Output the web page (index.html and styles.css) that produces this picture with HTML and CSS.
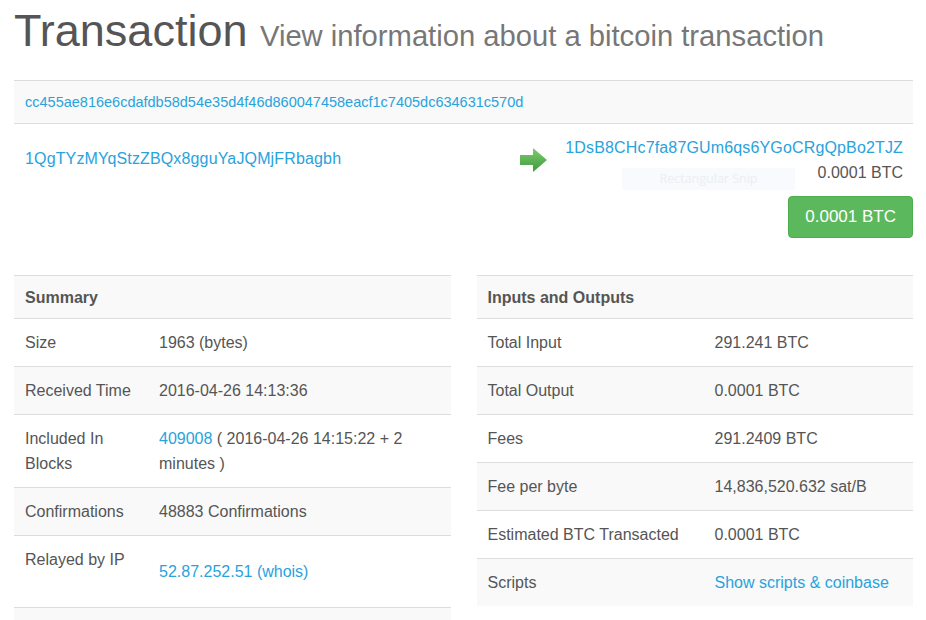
FILE: index.html
```html
<!DOCTYPE html>
<html lang="en">
  <head>
    <meta charset="UTF-8" />
    <title>Transaction</title>
    <link rel="stylesheet" href="styles.css">
  </head>
  <body>
    <div class="page">
      <h1 class="page-title">Transaction <small>View information about a bitcoin transaction</small></h1>

      <div class="tx">
        <div class="tx-hash">
          <a href="#">cc455ae816e6cdafdb58d54e35d4f46d860047458eacf1c7405dc634631c570d</a>
        </div>
        <div class="tx-io">
          <div class="tx-from">
            <a href="#">1QgTYzMYqStzZBQx8gguYaJQMjFRbagbh</a>
          </div>
          <div class="tx-arrow">
            <svg width="28" height="24" viewBox="0 0 28 24">
              <defs>
                <linearGradient id="arrowFill" x1="0" y1="0" x2="0" y2="1">
                  <stop offset="0" stop-color="#7ccd6f" />
                  <stop offset="1" stop-color="#3e9a3c" />
                </linearGradient>
              </defs>
              <path d="M1 7 H14 V0 L28 12 L14 24 V17 H1 Z" fill="url(#arrowFill)" />
            </svg>
          </div>
          <div class="tx-to">
            <a class="tx-addr" href="#">1DsB8CHc7fa87GUm6qs6YGoCRgQpBo2TJZ</a>
            <span class="tx-amount">0.0001 BTC</span>
            <button class="btn-total">0.0001 BTC</button>
          </div>
          <div class="snip-ghost">Rectangular Snip</div>
        </div>
      </div>

      <div class="tx-tables">
        <table class="info-table summary">
          <tr><th colspan="2">Summary</th></tr>
          <tr><td>Size</td><td>1963 (bytes)</td></tr>
          <tr><td>Received Time</td><td>2016-04-26 14:13:36</td></tr>
          <tr><td>Included In Blocks</td><td><a href="#">409008</a> ( 2016-04-26 14:15:22 + 2 minutes )</td></tr>
          <tr><td>Confirmations</td><td>48883 Confirmations</td></tr>
          <tr><td>Relayed by IP</td><td><span class="relay"><a href="#">52.87.252.51</a> <a href="#">(whois)</a></span></td></tr>
          <tr><td colspan="2">&nbsp;</td></tr>
        </table>

        <table class="info-table totals">
          <tr><th colspan="2">Inputs and Outputs</th></tr>
          <tr><td>Total Input</td><td>291.241 BTC</td></tr>
          <tr><td>Total Output</td><td>0.0001 BTC</td></tr>
          <tr><td>Fees</td><td>291.2409 BTC</td></tr>
          <tr><td>Fee per byte</td><td>14,836,520.632 sat/B</td></tr>
          <tr><td>Estimated BTC Transacted</td><td>0.0001 BTC</td></tr>
          <tr class="last"><td>Scripts</td><td><a href="#">Show scripts &amp; coinbase</a></td></tr>
        </table>
      </div>
    </div>
  </body>
</html>
```

FILE: styles.css
```css
/* General */
body {
  margin: 0;
  padding: 0;
  background: #fff;
  font-family: "Liberation Sans", Arial, sans-serif;
  color: #555;
  overflow: hidden;
}

a {
  color: #28a3dc;
  text-decoration: none;
}

.page {
  margin: 0 13px 0 14px;
}

/* Title */
.page-title {
  margin: 0 0 23px;
  padding-top: 5px;
  font-size: 45px;
  line-height: 52px;
  font-weight: normal;
  color: #555;
}

.page-title small {
  font-size: 29.2px;
  line-height: 1;
  color: #777;
}

/* Transaction box */
.tx-hash {
  background: #f9f9f9;
  border-top: 1px solid #ddd;
  border-bottom: 1px solid #ddd;
  padding: 11px 11px;
  font-size: 14.5px;
  line-height: 20px;
}

.tx-io {
  position: relative;
  display: flex;
}

.tx-io a {
  letter-spacing: 0.15px;
}

.tx-from {
  flex: 1;
  padding: 23px 11px 0;
  font-size: 16px;
  line-height: 24px;
}

.tx-arrow {
  margin: 24px 18px 0 0;
  height: 24px;
}

.tx-arrow svg {
  display: block;
}

.tx-to {
  display: flex;
  flex-direction: column;
  align-items: flex-end;
  padding-top: 11px;
  font-size: 16px;
  line-height: 25px;
}

.tx-addr,
.tx-amount {
  padding-right: 10px;
}

.btn-total {
  margin-top: 11px;
  padding: 9px 16px;
  font-family: inherit;
  font-size: 17px;
  line-height: 22px;
  color: #fff;
  background: #5cb85c;
  border: 1px solid #4cae4c;
  border-radius: 4px;
}

/* screenshot tool overlay left in the capture */
.snip-ghost {
  position: absolute;
  left: 608px;
  top: 44px;
  width: 173px;
  height: 22px;
  background: #f8fafd;
  color: #eceef2;
  font-family: "Open Sans", sans-serif;
  font-size: 12.5px;
  line-height: 22px;
  text-align: center;
}

/* Tables */
.tx-tables {
  display: flex;
  align-items: flex-start;
  gap: 26px;
  margin-top: 37px;
}

.info-table {
  flex: 1;
  border-collapse: collapse;
  font-size: 16px;
  line-height: 25px;
}

.info-table tr {
  border-top: 1px solid #ddd;
}

.info-table tr:nth-child(odd) {
  background: #f9f9f9;
}

.info-table th {
  text-align: left;
  padding: 9px 11px 8px;
  font-weight: bold;
  color: #555;
}

.info-table td {
  padding: 11px 11px;
  vertical-align: top;
}

.info-table .last {
  border-bottom: none;
}

.summary td:first-child {
  width: 112px;
}

.totals td:first-child {
  width: 205px;
}

.relay {
  display: block;
  line-height: 49px;
}
```
